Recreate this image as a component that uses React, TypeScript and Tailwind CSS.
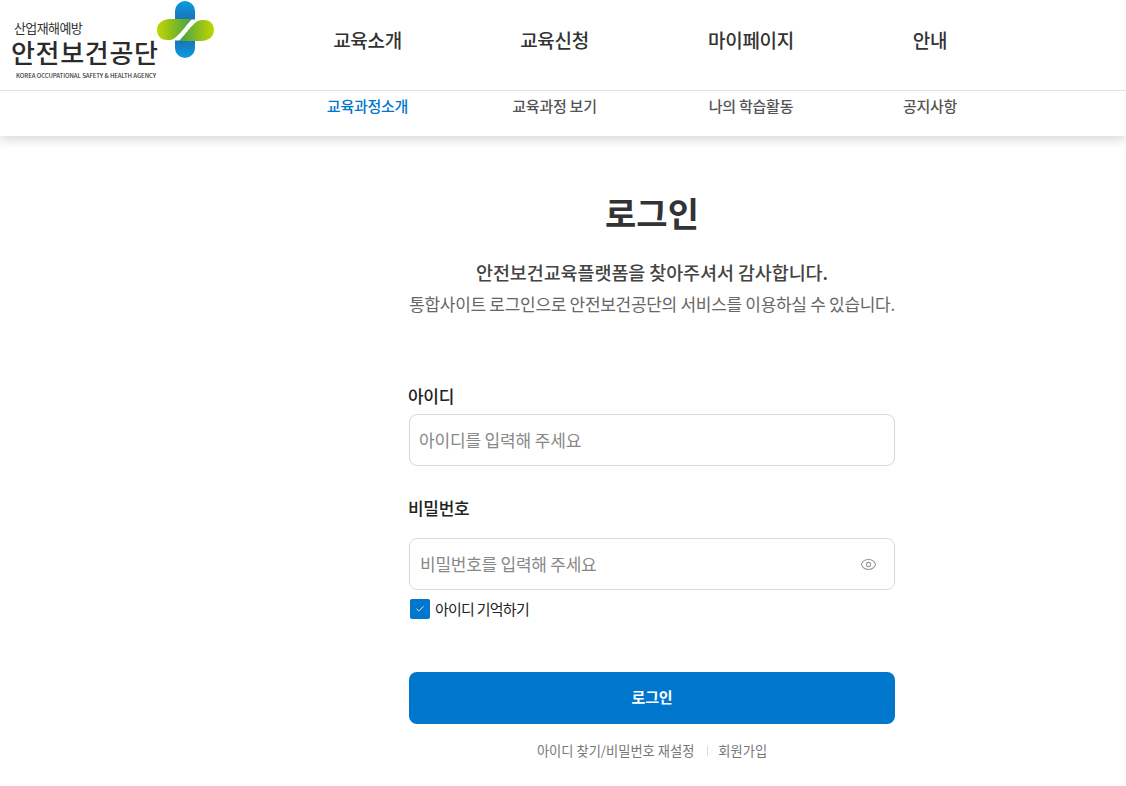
import { Eye, Check } from "lucide-react"

const font = "font-['Noto_Sans_CJK_KR','Noto_Sans',sans-serif]"

const menus = [
  { title: "교육소개", sub: "교육과정소개", w: "w-[187px]", active: true },
  { title: "교육신청", sub: "교육과정 보기", w: "w-[187px]" },
  { title: "마이페이지", sub: "나의 학습활동", w: "w-[206px]" },
  { title: "안내", sub: "공지사항", w: "w-[152px]" },
]

function Logo() {
  return (
    <div className="relative w-[215px] h-[90px] shrink-0">
      <span className="absolute left-[14px] top-[20px] text-[13px] leading-[16px] tracking-[-0.6px] text-[#333]">산업재해예방</span>
      <span className="absolute left-[11px] top-[36px] text-[26px] leading-[32px] font-medium tracking-[0.7px] text-[#2b2b2b]">안전보건공단</span>
      <span className="absolute left-[16px] top-[72px] text-[6px] leading-[8px] font-medium tracking-[-0.05px] whitespace-nowrap text-[#333]">KOREA OCCUPATIONAL SAFETY &amp; HEALTH AGENCY</span>
      <svg className="absolute left-[156px] top-0" width="59" height="59" viewBox="0 0 59 59">
        <defs>
          <linearGradient id="blue" x1="0" y1="0" x2="0" y2="1">
            <stop offset="0" stopColor="#0a9be0" />
            <stop offset="1" stopColor="#1a74b8" />
          </linearGradient>
          <linearGradient id="blue2" x1="0" y1="1" x2="0" y2="0">
            <stop offset="0" stopColor="#0a9be0" />
            <stop offset="1" stopColor="#1a74b8" />
          </linearGradient>
          <linearGradient id="green" x1="0" y1="0" x2="1" y2="0">
            <stop offset="0" stopColor="#c4d600" />
            <stop offset="1" stopColor="#3fa046" />
          </linearGradient>
          <linearGradient id="green2" x1="1" y1="0" x2="0" y2="0">
            <stop offset="0" stopColor="#c4d600" />
            <stop offset="1" stopColor="#3fa046" />
          </linearGradient>
        </defs>
        <path d="M19 11 a10 10 0 0 1 20 0 L39 19.5 L19 19.5 Z" fill="url(#blue)" />
        <path d="M39 48 a10 10 0 0 1 -20 0 L19 40.5 L39 40.5 Z" fill="url(#blue2)" />
        <path d="M1 30 C1 23 7 19 14 19 L36 19 C30 25 26 32 20 37 C17 40 14 40 11 40 C5 40 1 36 1 30 Z" fill="url(#green)" />
        <path d="M58 30 C58 37 52 41 45 41 L23 41 C29 35 33 28 39 23 C42 20 45 20 48 20 C54 20 58 24 58 30 Z" fill="url(#green2)" />
      </svg>
    </div>
  )
}

function Header() {
  return (
    <header className="h-[136px] shadow-[0_4px_10px_rgba(0,0,0,0.15)]">
      <div className="h-[91px] border-b border-[#e2e2e2] flex">
        <Logo />
        <nav className="flex ml-[59px]">
          {menus.map((m) => (
            <div key={m.title} className={`${m.w} pt-[27px] text-center text-[19px] leading-[26px] tracking-[-0.3px] font-medium text-[#333]`}>
              {m.title}
            </div>
          ))}
        </nav>
      </div>
      <div className="flex ml-[274px]">
        {menus.map((m) => (
          <div
            key={m.sub}
            className={`${m.w} pt-[4px] text-center text-[15px] leading-[22px] tracking-[-0.25px] font-medium ${m.active ? "text-[#0077cc]" : "text-[#555]"}`}
          >
            {m.sub}
          </div>
        ))}
      </div>
    </header>
  )
}

export default function App() {
  return (
    <div className={`${font} w-[1126px] h-[786px] overflow-hidden bg-white`}>
      <Header />
      <main className="w-[486px] ml-[409px]">
        <h1 className="mt-[51px] text-center text-[34px] leading-[52px] font-bold text-[#333]">로그인</h1>
        <p className="mt-[20px] text-center text-[18.5px] leading-[26px] font-medium tracking-[-0.1px] text-[#444]">안전보건교육플랫폼을 찾아주셔서 감사합니다.</p>
        <p className="mt-[6px] text-center text-[17px] leading-[26px] tracking-[-0.3px] text-[#666] whitespace-nowrap">통합사이트 로그인으로 안전보건공단의 서비스를 이용하실 수 있습니다.</p>

        <label className="block -ml-[1px] mt-[67px] text-[17px] leading-[24px] tracking-[-0.3px] font-medium text-[#222]">아이디</label>
        <div className="mt-[6px] h-[52px] border border-[#d9d9d9] rounded-[8px] flex items-center px-[9px] text-[17px] tracking-[-0.15px] text-[#888]">
          아이디를 입력해 주세요
        </div>

        <label className="block -ml-[1px] mt-[30px] text-[17px] leading-[24px] tracking-[-0.3px] font-medium text-[#222]">비밀번호</label>
        <div className="mt-[18px] h-[52px] border border-[#d9d9d9] rounded-[8px] flex items-center justify-between pl-[10px] pr-[17px] text-[17px] tracking-[-0.25px] text-[#888]">
          <span>비밀번호를 입력해 주세요</span>
          <Eye size={17} strokeWidth={1.5} className="text-[#999]" />
        </div>

        <div className="mt-[8px] flex items-center gap-[5px] pl-[1px]">
          <span className="w-[20px] h-[20px] rounded-[2px] bg-[#0077cc] flex items-center justify-center">
            <Check size={10} strokeWidth={2} className="text-white" />
          </span>
          <span className="text-[15px] leading-[22px] tracking-[-0.75px] text-[#222]">아이디 기억하기</span>
        </div>

        <button className="mt-[52px] w-full h-[52px] pb-[2px] rounded-[8px] bg-[#0077cc] text-white text-[15px] tracking-[-0.2px] font-bold">로그인</button>

        <div className="mt-[17px] flex items-center justify-center text-[13.25px] leading-[20px] text-[#777]">
          <span>아이디 찾기/비밀번호 재설정</span>
          <span className="ml-[13px] mr-[10px] h-[10px] w-px bg-[#ddd]" />
          <span>회원가입</span>
        </div>
      </main>
    </div>
  )
}
